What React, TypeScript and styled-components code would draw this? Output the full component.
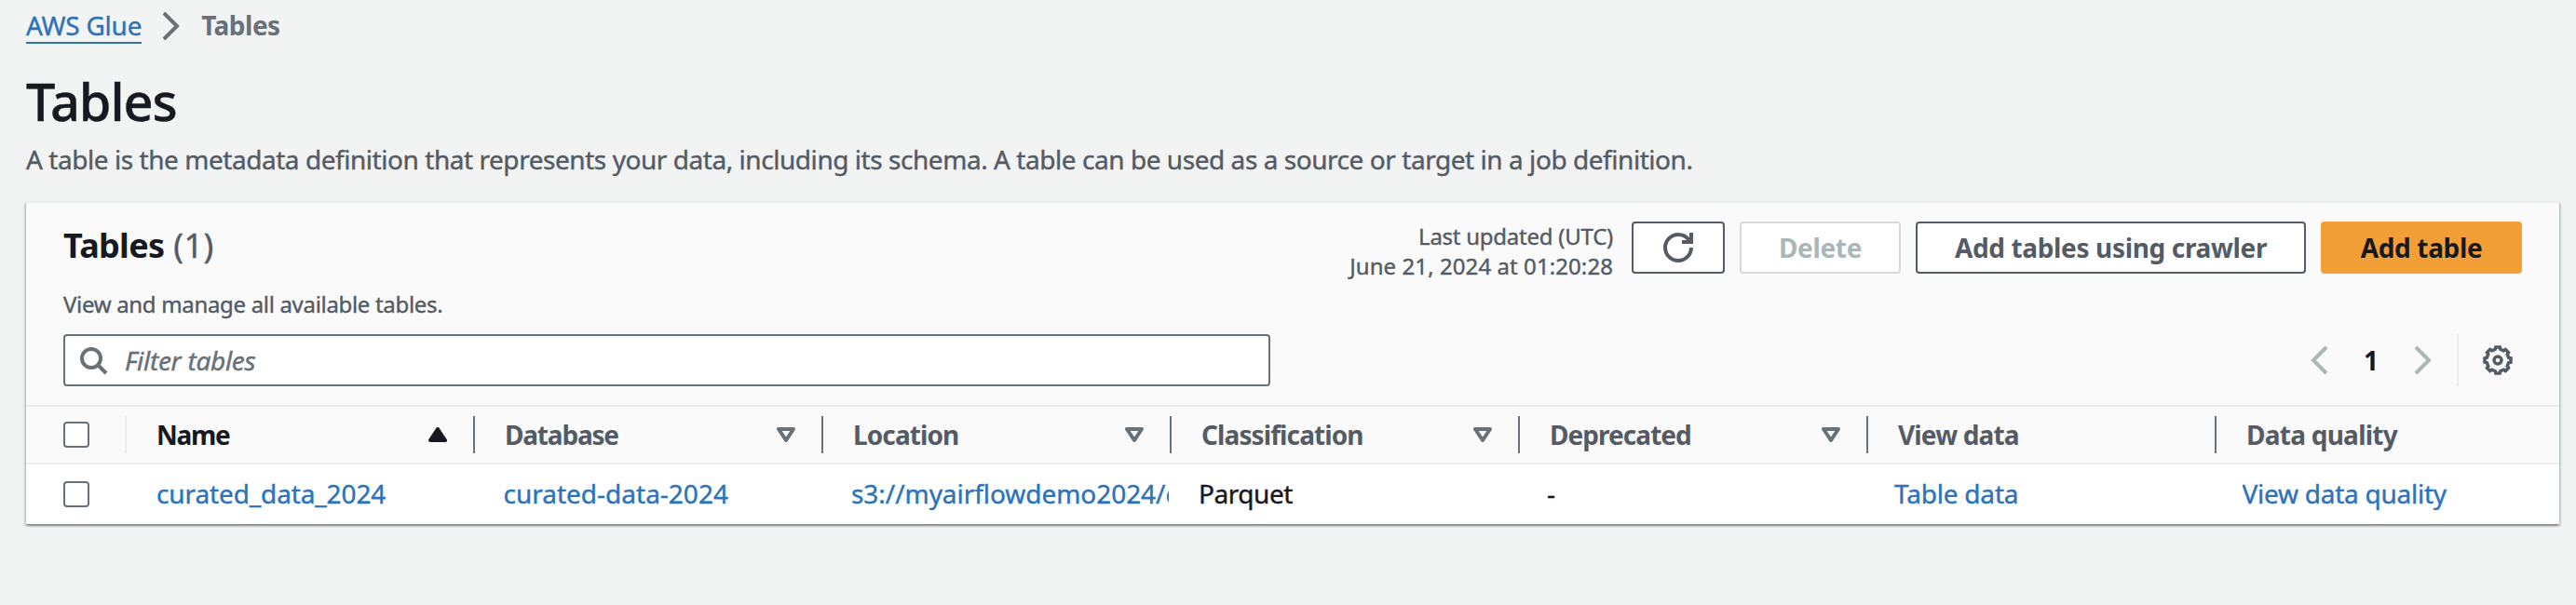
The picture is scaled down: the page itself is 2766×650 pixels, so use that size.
import React from "react";
import styled, { createGlobalStyle } from "styled-components";

const color = {
  page: "#f2f4f4",
  panel: "#fafafa",
  ink: "#16191f",
  secondary: "#545b64",
  muted: "#687078",
  disabled: "#aab7b8",
  disabledBorder: "#d5dbdb",
  line: "#eaeded",
  link: "#2e72b8",
  primary: "#f29f38",
};

const GlobalStyle = createGlobalStyle`
  *, *::before, *::after { box-sizing: border-box; }
  body {
    margin: 0;
    background: ${color.page};
    color: ${color.ink};
    font-family: "Noto Sans", "Open Sans", sans-serif;
    font-size: 28px;
    line-height: 44px;
    -webkit-text-stroke: 0.4px;
  }
  h1, h2, p { margin: 0; }
  button, input { font: inherit; }
`;

const Page = styled.main`
  width: 2766px;
  height: 650px;
  padding: 11px 18px 0 28px;
  overflow: hidden;
`;

const Breadcrumbs = styled.nav`
  display: flex;
  align-items: flex-start;
  height: 61px;
  line-height: 32px;
`;

const BreadcrumbLink = styled.a`
  padding-bottom: 2px;
  border-bottom: 2px solid ${color.link};
  color: ${color.link};
  letter-spacing: -0.25px;
  white-space: nowrap;
`;

const BreadcrumbSeparator = styled.span`
  display: flex;
  margin: 1px 16px 0 16px;
  color: ${color.muted};
`;

const BreadcrumbCurrent = styled.span`
  color: ${color.muted};
  font-weight: 700;
  letter-spacing: -0.5px;
  -webkit-text-stroke: 0;
`;

const PageTitle = styled.h1`
  font-size: 56px;
  font-weight: 500;
  line-height: 72px;
  letter-spacing: -1.1px;
`;

const PageDescription = styled.p`
  margin: 5px 0 23px;
  color: ${color.secondary};
  letter-spacing: -0.45px;
`;

const Panel = styled.section`
  width: 2720px;
  border-top: 2px solid ${color.line};
  background: #fff;
  box-shadow:
    0 2px 2px 0 rgba(0, 28, 36, 0.3),
    2px 2px 2px 0 rgba(0, 28, 36, 0.15),
    -2px 2px 2px 0 rgba(0, 28, 36, 0.15);
`;

const PanelHeader = styled.header`
  height: 219px;
  padding: 20px 40px;
  border-bottom: 2px solid ${color.line};
  background: ${color.panel};
`;

const TitleRow = styled.div`
  display: flex;
  justify-content: space-between;
  height: 73px;
`;

const PanelTitle = styled.h2`
  margin-top: 4px;
  font-size: 36px;
  font-weight: 700;
  letter-spacing: -0.7px;
  -webkit-text-stroke: 0;
`;

const Counter = styled.span`
  margin-left: 10px;
  color: ${color.secondary};
  font-weight: 400;
  letter-spacing: 0.4px;
  -webkit-text-stroke: 0.4px;
`;

const Actions = styled.div`
  display: flex;
  align-items: flex-start;
  gap: 16px;
`;

const LastUpdated = styled.div`
  display: flex;
  flex-direction: column;
  align-items: flex-end;
  margin-right: 4px;
  color: ${color.secondary};
  font-size: 24px;
  line-height: 32px;
`;

const UpdatedLine = styled.span<{ $spacing: number }>`
  letter-spacing: ${(p) => p.$spacing}px;
`;

type ButtonKind = "normal" | "disabled" | "primary";

const buttonBorder = {
  normal: color.secondary,
  disabled: color.disabledBorder,
  primary: color.primary,
};
const buttonText = {
  normal: color.secondary,
  disabled: color.disabled,
  primary: color.ink,
};

const Button = styled.button<{ $kind?: ButtonKind; $width: number }>`
  display: flex;
  align-items: center;
  justify-content: center;
  width: ${(p) => p.$width}px;
  height: 56px;
  padding: 0 0 1px;
  border: 2px solid ${(p) => buttonBorder[p.$kind ?? "normal"]};
  border-radius: 4px;
  background: ${(p) => (p.$kind === "primary" ? color.primary : "#fff")};
  color: ${(p) => buttonText[p.$kind ?? "normal"]};
  font-weight: 700;
  letter-spacing: -0.35px;
  white-space: nowrap;
  -webkit-text-stroke: 0;
`;

const IconButton = styled(Button)`
  padding: 0;
`;

const PanelDescription = styled.p`
  color: ${color.secondary};
  font-size: 24px;
  line-height: 32px;
  letter-spacing: -0.32px;
`;

const ToolRow = styled.div`
  display: flex;
  justify-content: space-between;
  margin-top: 16px;
`;

const FilterBox = styled.label`
  display: flex;
  align-items: center;
  width: 1296px;
  height: 56px;
  padding-left: 14px;
  border: 2px solid ${color.muted};
  border-radius: 4px;
  background: #fff;
  color: ${color.muted};
`;

const FilterInput = styled.input`
  flex: 1;
  height: 44px;
  margin-left: 18px;
  padding: 0;
  border: 0;
  outline: 0;
  background: transparent;
  letter-spacing: -0.3px;
  &::placeholder {
    color: ${color.muted};
    font-style: italic;
    opacity: 1;
  }
`;

const Pagination = styled.div`
  display: flex;
  align-items: center;
  height: 56px;
  color: ${color.disabled};
`;

const PageNumber = styled.span`
  width: 78px;
  padding: 0 2px 1px 0;
  color: ${color.ink};
  font-weight: 700;
  text-align: center;
  -webkit-text-stroke: 0;
`;

const PreferencesButton = styled.span`
  display: flex;
  align-items: center;
  height: 56px;
  margin-left: 20px;
  padding: 0 10px 0 26px;
  border-left: 2px solid ${color.line};
  color: ${color.secondary};
`;

const TableRow = styled.div<{ $head?: boolean }>`
  display: grid;
  grid-template-columns: 108px repeat(6, 374px) 368px;
  align-items: center;
  height: ${(p) => (p.$head ? 62 : 64)}px;
  border-bottom: ${(p) => (p.$head ? `2px solid ${color.line}` : "0")};
  background: ${(p) => (p.$head ? color.panel : "#fff")};
`;

const SelectCell = styled.div<{ $divided?: boolean }>`
  display: flex;
  align-items: center;
  height: 40px;
  padding-left: 40px;
  border-right: 2px solid ${(p) => (p.$divided ? color.line : "transparent")};
`;

const Checkbox = styled.span`
  width: 28px;
  height: 28px;
  border: 2px solid ${color.muted};
  border-radius: 4px;
  background: #fff;
`;

const HeadCell = styled.div<{ $active?: boolean; $last?: boolean }>`
  display: flex;
  align-items: center;
  justify-content: space-between;
  height: 40px;
  padding: 0 28px 0 32px;
  border-right: ${(p) => (p.$last ? "0" : `2px solid ${color.muted}`)};
  color: ${(p) => (p.$active ? color.ink : color.secondary)};
`;

const HeadLabel = styled.span<{ $spacing: number }>`
  padding-bottom: 1px;
  font-weight: 700;
  letter-spacing: ${(p) => p.$spacing}px;
  white-space: nowrap;
  -webkit-text-stroke: 0;
`;

const Cell = styled.div<{ $inset: number; $spacing: number; $link?: boolean }>`
  margin: 0 3px 0 ${(p) => p.$inset}px;
  padding-bottom: 2px;
  overflow: hidden;
  color: ${(p) => (p.$link ? color.link : color.ink)};
  letter-spacing: ${(p) => p.$spacing}px;
  white-space: nowrap;
`;

const Svg = styled.svg`
  display: block;
  flex: none;
  fill: none;
  stroke: currentColor;
`;

const SortSvg = styled(Svg)<{ $tone: string }>`
  color: ${(p) => p.$tone};
`;

const icon = { width: 32, height: 32, viewBox: "0 0 16 16", strokeWidth: 2 };

const ChevronRight = () => (
  <Svg {...icon}><path d="M4 1l7 7-7 7" /></Svg>
);
const ChevronLeft = () => (
  <Svg {...icon}><path d="M11 1L4 8l7 7" /></Svg>
);
const SearchIcon = () => (
  <Svg {...icon}>
    <circle cx="7" cy="7" r="5" />
    <path d="M15 15l-4.5-4.5" />
  </Svg>
);
const RefreshIcon = () => (
  <Svg {...icon}>
    <path d="M15 8c0 3.87-3.13 7-7 7s-7-3.13-7-7 3.13-7 7-7c2.79 0 5.2 1.63 6.33 4" />
    <path d="M10 5h5V0" />
  </Svg>
);

const gearPoints = Array.from({ length: 8 }, (_, k) =>
  [[6, -13.5], [7.1, -9], [7.1, 9], [6, 13.5]].map(([r, offset]) => {
    const a = ((k * 45 + offset) * Math.PI) / 180;
    return `${(8 + r * Math.cos(a)).toFixed(2)},${(8 + r * Math.sin(a)).toFixed(2)}`;
  }).join(" ")
).join(" ");

const GearIcon = () => (
  <Svg {...icon} strokeWidth={1.75}>
    <polygon points={gearPoints} />
    <circle cx="8" cy="8" r="2" />
  </Svg>
);

const SortIcon = ({ ascending }: { ascending?: boolean }) => (
  <SortSvg
    $tone={ascending ? color.ink : color.muted}
    width="20"
    height="16"
    viewBox="0 0 20 16"
    strokeWidth="4"
    strokeLinejoin="round"
  >
    {ascending ? (
      <path d="M2 14L10 2l8 12z" fill="currentColor" />
    ) : (
      <path d="M2 2h16l-8 12z" />
    )}
  </SortSvg>
);

type Column = {
  label: string;
  labelSpacing: number;
  value: string;
  valueSpacing: number;
  inset: number;
  sort?: "asc" | "none";
  link?: boolean;
};

const columns: Column[] = [
  { label: "Name", labelSpacing: -1.3, value: "curated_data_2024", valueSpacing: -0.12, inset: 32, sort: "asc", link: true },
  { label: "Database", labelSpacing: -1.2, value: "curated-data-2024", valueSpacing: 0, inset: 30.5, sort: "none", link: true },
  { label: "Location", labelSpacing: -0.9, value: "s3://myairflowdemo2024/c", valueSpacing: -0.05, inset: 30, sort: "none", link: true },
  { label: "Classification", labelSpacing: -0.9, value: "Parquet", valueSpacing: -0.45, inset: 29, sort: "none" },
  { label: "Deprecated", labelSpacing: -0.95, value: "-", valueSpacing: 0, inset: 29, sort: "none" },
  { label: "View data", labelSpacing: -0.85, value: "Table data", valueSpacing: -0.2, inset: 28, link: true },
  { label: "Data quality", labelSpacing: -0.75, value: "View data quality", valueSpacing: -0.25, inset: 27.5, link: true },
];

export default function App() {
  return (
    <>
      <GlobalStyle />
      <Page>
        <Breadcrumbs>
          <BreadcrumbLink>AWS Glue</BreadcrumbLink>
          <BreadcrumbSeparator><ChevronRight /></BreadcrumbSeparator>
          <BreadcrumbCurrent>Tables</BreadcrumbCurrent>
        </Breadcrumbs>
        <PageTitle>Tables</PageTitle>
        <PageDescription>
          A table is the metadata definition that represents your data, including its schema. A table can be used as a source or target in a job definition.
        </PageDescription>
        <Panel>
          <PanelHeader>
            <TitleRow>
              <PanelTitle>Tables<Counter>(1)</Counter></PanelTitle>
              <Actions>
                <LastUpdated>
                  <UpdatedLine $spacing={-0.25}>Last updated (UTC)</UpdatedLine>
                  <UpdatedLine $spacing={0.08}>June 21, 2024 at 01:20:28</UpdatedLine>
                </LastUpdated>
                <IconButton $width={100} aria-label="Refresh"><RefreshIcon /></IconButton>
                <Button $kind="disabled" $width={173}>Delete</Button>
                <Button $width={419}>Add tables using crawler</Button>
                <Button $kind="primary" $width={216}>Add table</Button>
              </Actions>
            </TitleRow>
            <PanelDescription>View and manage all available tables.</PanelDescription>
            <ToolRow>
              <FilterBox>
                <SearchIcon />
                <FilterInput placeholder="Filter tables" />
              </FilterBox>
              <Pagination>
                <ChevronLeft />
                <PageNumber>1</PageNumber>
                <ChevronRight />
                <PreferencesButton><GearIcon /></PreferencesButton>
              </Pagination>
            </ToolRow>
          </PanelHeader>
          <TableRow $head>
            <SelectCell $divided><Checkbox /></SelectCell>
            {columns.map((c, i) => (
              <HeadCell key={c.label} $active={c.sort === "asc"} $last={i === columns.length - 1}>
                <HeadLabel $spacing={c.labelSpacing}>{c.label}</HeadLabel>
                {c.sort && <SortIcon ascending={c.sort === "asc"} />}
              </HeadCell>
            ))}
          </TableRow>
          <TableRow>
            <SelectCell><Checkbox /></SelectCell>
            {columns.map((c) => (
              <Cell key={c.label} $inset={c.inset} $spacing={c.valueSpacing} $link={c.link}>
                {c.value}
              </Cell>
            ))}
          </TableRow>
        </Panel>
      </Page>
    </>
  );
}
